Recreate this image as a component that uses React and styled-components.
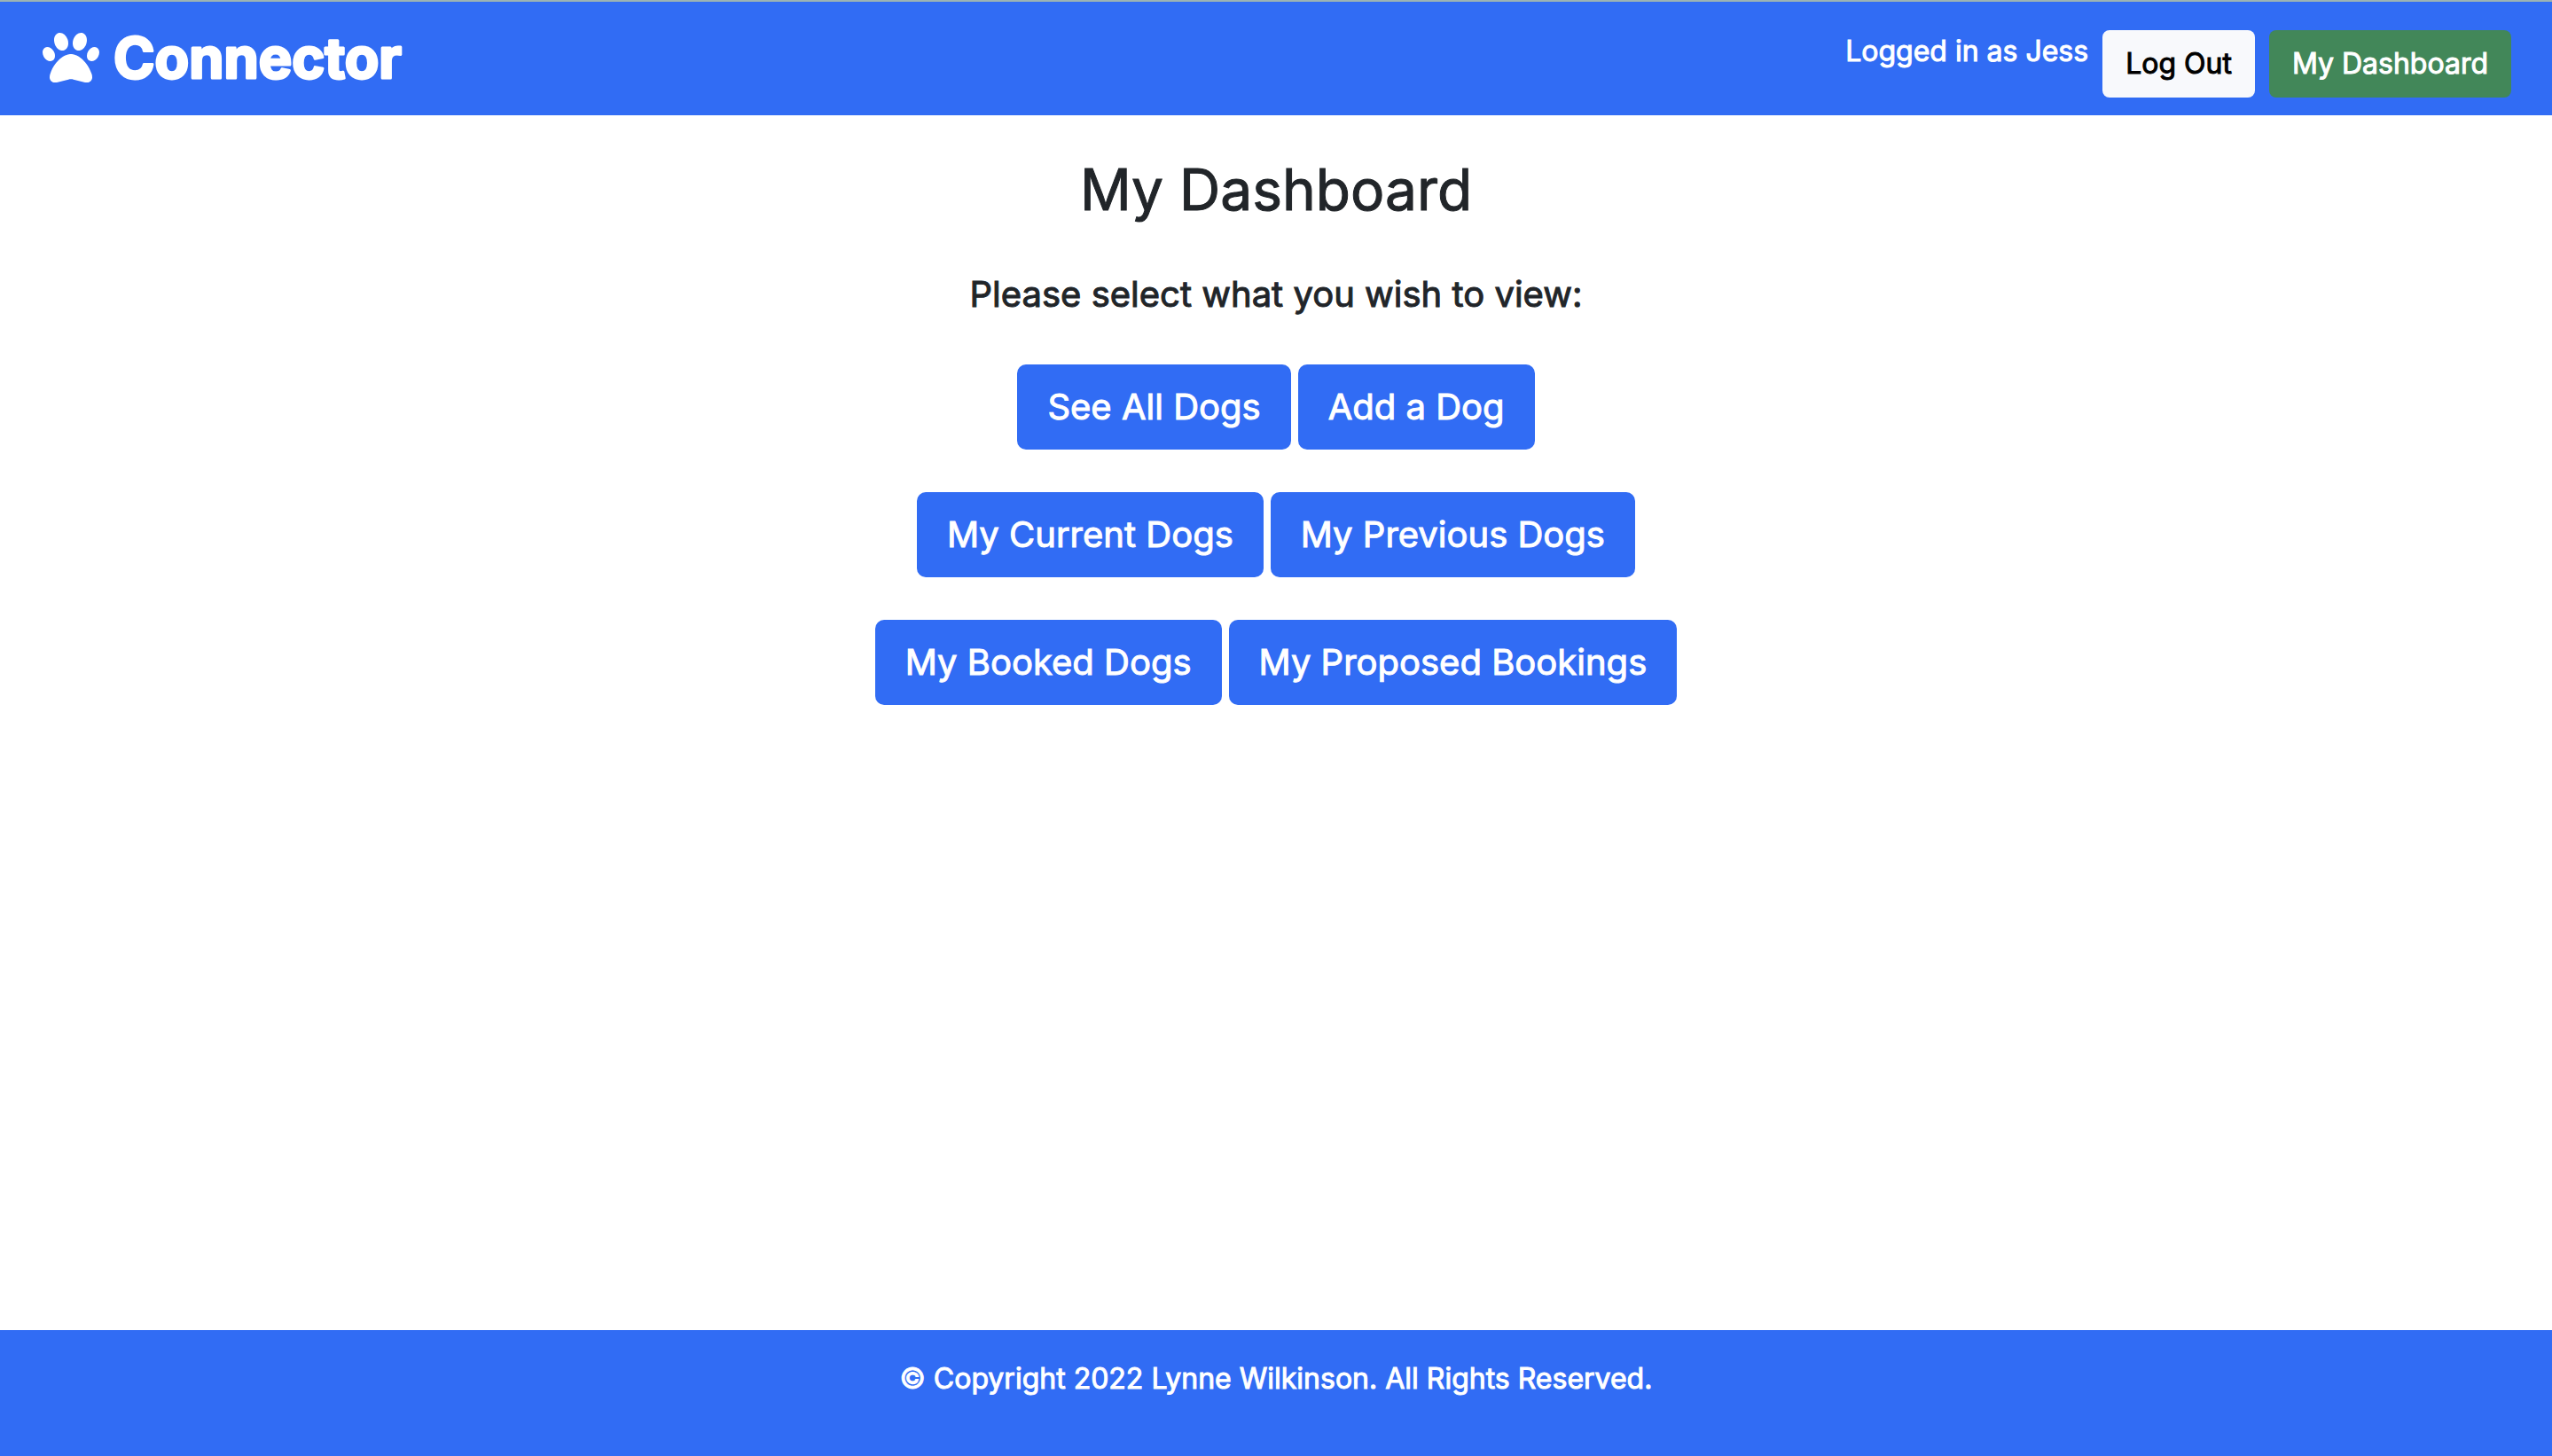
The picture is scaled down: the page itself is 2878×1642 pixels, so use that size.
import React from "react";
import styled, { createGlobalStyle } from "styled-components";

const GlobalStyle = createGlobalStyle`
  *, *::before, *::after { box-sizing: border-box; }
  body {
    margin: 0;
    background: #fff;
    color: #212529;
    font-family: Inter, "Noto Sans", sans-serif;
    font-size: 32px;
    line-height: 48px;
    -webkit-text-stroke: 1px currentColor;
  }
`;

const Page = styled.div`
  display: flex;
  flex-direction: column;
  min-height: 100vh;
`;

const Header = styled.header`
  display: flex;
  align-items: center;
  justify-content: space-between;
  padding: 24px 46px 12px 48px;
  border-top: 2px solid #9cb3b3;
  background: #316cf4;
`;

const Brand = styled.a`
  display: flex;
  color: #fff;
  text-decoration: none;
`;

const Logo = styled.svg`
  display: block;
  width: 420px;
  height: 92px;
  fill: #fff;
`;

const Wordmark = styled.text`
  font-family: Inter, "Noto Sans", sans-serif;
  font-size: 63px;
  font-weight: 700;
  fill: #fff;
  stroke: #fff;
  stroke-width: 3px;
  stroke-linejoin: round;
`;

const Nav = styled.nav`
  display: flex;
  align-items: flex-start;
  gap: 16px;
`;

const UserLabel = styled.span`
  color: #fff;
`;

const variants = {
  primary: "background: #316cf4; color: #fff;",
  light: "background: #f8f9fc; color: #000;",
  success: "background: #428759; color: #fff;",
};

const Button = styled.button`
  padding: ${(p) => (p.$large ? "18px 34px" : "14px 26px")};
  border: 0;
  border-radius: ${(p) => (p.$large ? "10px" : "8px")};
  font-family: inherit;
  font-size: ${(p) => (p.$large ? "40px" : "32px")};
  line-height: ${(p) => (p.$large ? "60px" : "48px")};
  white-space: nowrap;
  cursor: pointer;
  ${(p) => variants[p.$variant]}
  -webkit-text-stroke: 1px currentColor;
`;

const Main = styled.main`
  flex: 1;
  display: flex;
  flex-direction: column;
  align-items: center;
  padding: 45px 24px;
`;

const Title = styled.h1`
  margin: 0 0 50px;
  font-size: 64px;
  font-weight: 400;
  line-height: 77px;
`;

const Lead = styled.p`
  margin: 0 0 49px;
  font-size: 40px;
  line-height: 60px;
`;

const Rows = styled.div`
  display: flex;
  flex-direction: column;
  gap: 48px;
`;

const Row = styled.div`
  display: flex;
  flex-wrap: wrap;
  justify-content: center;
  gap: 8px;
`;

const Footer = styled.footer`
  padding: 31px 24px 63px;
  background: #316cf4;
  color: #fff;
  text-align: center;
  -webkit-text-stroke: 1px currentColor;
`;

const actions = [
  ["See All Dogs", "Add a Dog"],
  ["My Current Dogs", "My Previous Dogs"],
  ["My Booked Dogs", "My Proposed Bookings"],
];

function BrandLogo() {
  return (
    <Logo viewBox="0 -7 420 92" role="img" aria-label="Connector">
      <g transform="scale(0.125)">
        <path d="M226.5 92.900c14.300 42.900-.3 86.200-32.600 96.800s-70.100-15.600-84.400-58.500s.3-86.200 32.600-96.800s70.100 15.600 84.400 58.500zM100.400 198.600c18.900 32.400 14.300 70.100-10.200 84.100s-59.700-.9-78.500-33.300S-2.700 179.300 21.800 165.300s59.700 .9 78.500 33.300zM69.200 401.200C121.600 259.900 214.700 224 256 224s134.400 35.900 186.800 177.200c3.600 9.700 5.200 20.100 5.200 30.500v1.600c0 25.800-20.900 46.700-46.700 46.700c-11.500 0-22.900-1.400-34-4.200l-88-22c-15.300-3.800-31.300-3.800-46.600 0l-88 22c-11.100 2.800-22.500 4.200-34 4.200C84.900 480 64 459.100 64 433.300v-1.600c0-10.400 1.600-20.800 5.200-30.500zM421.800 282.700c-24.500-14-29.100-51.700-10.200-84.100s54-47.300 78.500-33.300s29.100 51.700 10.200 84.100s-54 47.300-78.500 33.300zM310.100 189.700c-32.300-10.600-46.900-53.900-32.600-96.800s52.100-69.100 84.400-58.500s46.900 53.900 32.600 96.800s-52.100 69.100-84.400 58.500z" />
      </g>
      <Wordmark x="80" y="55">Connector</Wordmark>
    </Logo>
  );
}

export default function App() {
  return (
    <Page>
      <GlobalStyle />
      <Header>
        <Brand href="#">
          <BrandLogo />
        </Brand>
        <Nav>
          <UserLabel>Logged in as Jess</UserLabel>
          <Button type="button" $variant="light">Log Out</Button>
          <Button type="button" $variant="success">My Dashboard</Button>
        </Nav>
      </Header>
      <Main>
        <Title>My Dashboard</Title>
        <Lead>Please select what you wish to view:</Lead>
        <Rows>
          {actions.map((row) => (
            <Row key={row[0]}>
              {row.map((label) => (
                <Button key={label} type="button" $variant="primary" $large>
                  {label}
                </Button>
              ))}
            </Row>
          ))}
        </Rows>
      </Main>
      <Footer>© Copyright 2022 Lynne Wilkinson. All Rights Reserved.</Footer>
    </Page>
  );
}
